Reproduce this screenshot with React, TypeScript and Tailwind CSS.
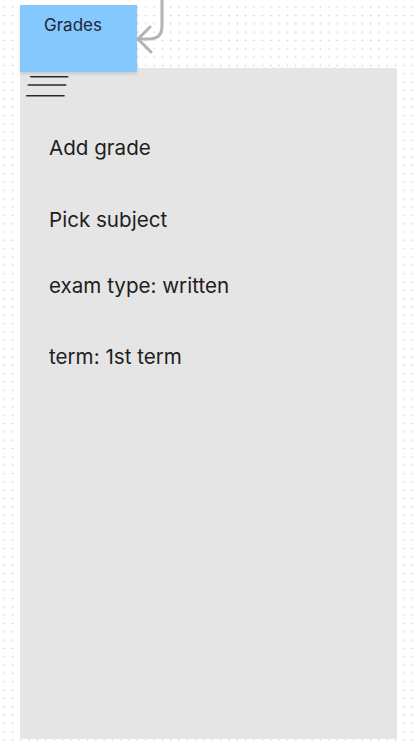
import React from 'react'

const font = { fontFamily: 'Inter, "Noto Sans", sans-serif' }

const Hamburger = () => (
  <svg width="48" height="28" viewBox="0 0 48 28" className="block ml-[4px] mt-[4px]">
    <g stroke="#2a2a2a" strokeWidth="1.6" strokeLinecap="round">
      <line x1="6.7" y1="4.7" x2="43.7" y2="4.7" />
      <line x1="4.3" y1="13" x2="41.7" y2="13" />
      <line x1="2.7" y1="23.7" x2="40" y2="23.7" />
    </g>
  </svg>
)

const Arrow = () => (
  <svg width="40" height="60" viewBox="0 0 40 60" className="absolute left-[130px] top-0">
    <g fill="none" stroke="#b3b3b3" strokeWidth="3" strokeLinecap="round" strokeLinejoin="round">
      <path d="M32 -2 V26 Q32 39 19 39 H9" />
      <path d="M20 27 L8 39 L21 52" />
    </g>
  </svg>
)

export default function App() {
  const rows = [
    { label: 'Add grade', mt: 'mt-[36px]' },
    { label: 'Pick subject', mt: 'mt-[48px]' },
    { label: 'exam type: written', mt: 'mt-[42px]' },
    { label: 'term: 1st term', mt: 'mt-[47px]' },
  ]
  return (
    <div
      className="relative w-[416px] h-[745px] overflow-hidden bg-white bg-[radial-gradient(circle,#cccccc_0.75px,transparent_1px)] bg-size-[8.33px_8.33px] bg-position-[0px_3px]"
      style={font}
    >
      <Arrow />
      <div className="flex flex-col pl-[20px] pt-[5px]">
        {/* sticky note */}
        <div className="relative z-10 w-[117px] h-[67px] bg-[#85c8fe] pl-[24px] pt-[10px] shadow-[0_2px_3px_rgba(0,0,0,0.12)]">
          <span className="block text-[17px] leading-[20px] text-[#1e2633]">Grades</span>
        </div>
        {/* screen */}
        <div className="-mt-[4px] w-[377px] h-[671px] bg-[#e5e5e5] rounded-[2px]">
          <Hamburger />
          <div className="flex flex-col pl-[29px]">
            {rows.map((r) => (
              <div key={r.label} className={`${r.mt} text-[20.6px] leading-[24px] text-[#1e1e1e]`}>
                {r.label}
              </div>
            ))}
          </div>
        </div>
      </div>
    </div>
  )
}
